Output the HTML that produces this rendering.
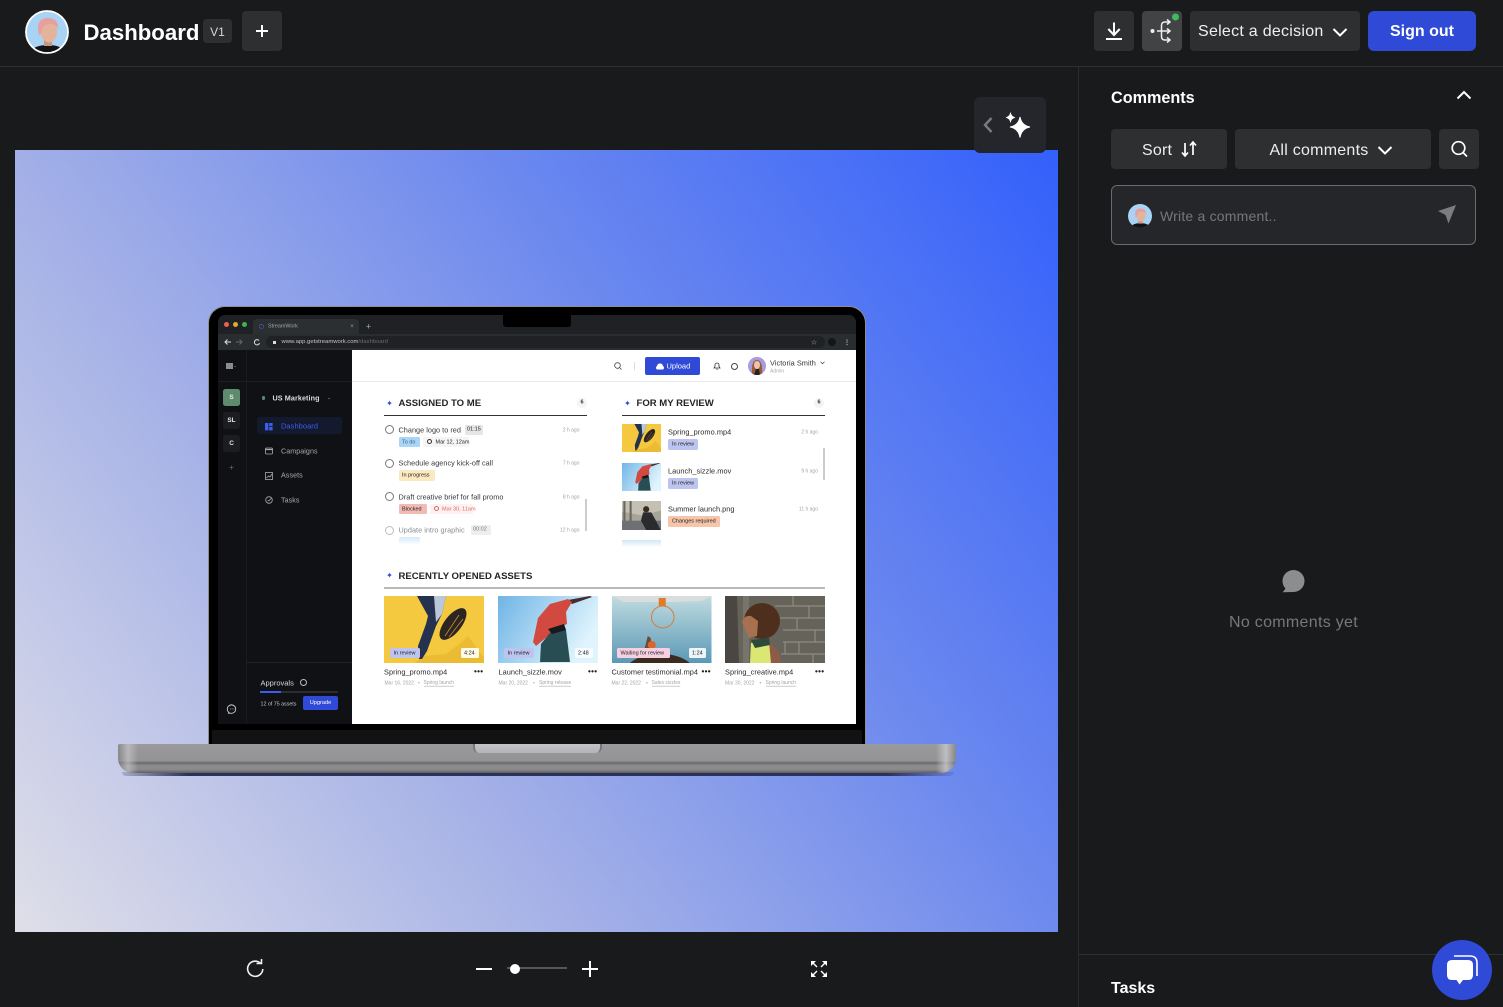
<!DOCTYPE html>
<html lang="en"><head><meta charset="utf-8"><title>Dashboard</title>
<style>
*{box-sizing:border-box}
html,body{margin:0;padding:0;width:1503px;height:1007px;overflow:hidden;background:#191a1c;font-family:"Liberation Sans",sans-serif;color:#fff}
.a{position:absolute}
.t{position:absolute;white-space:nowrap;line-height:1;transform:translateY(-50%)}
.r{transform:translate(-100%,-50%)}
.c{transform:translate(-50%,-50%)}
.b{position:absolute;background:#2e2f31;border-radius:4px}
svg{position:absolute;overflow:visible}
.lp{position:absolute;left:0;top:0;width:1503px;height:1007px;filter:blur(.3px)}
.lp .t{margin-top:1px}
.lp .t.k,.lp .t.n{margin-top:.4px}
.k{color:#333a40;font-size:7.3px;letter-spacing:.02px}
.g{color:#a3a3a3;font-size:5px}
.tg{position:absolute;border-radius:1.5px}
.f{color:#222;font-size:5.5px}
.n{color:#2a2a2a;font-size:7.35px;letter-spacing:.05px}
.m{color:#a5a5a5;font-size:5px}
.ml{color:#a5a5a5;font-size:5px;border-bottom:.5px solid #ccc;padding-bottom:.5px}
.sd{color:#a9abaf;font-size:7.1px;letter-spacing:.08px}
.d{color:#222;font-size:8px;font-weight:bold;letter-spacing:.3px}
.h{color:#232323;font-weight:bold;font-size:9.55px}
</style></head><body>

<svg width="0" height="0" style="position:absolute">
<defs>
<linearGradient id="sky2" x1="0" x2="1" y1="0" y2=".4"><stop offset="0" stop-color="#6fb4e6"/><stop offset="1" stop-color="#dff4fd"/></linearGradient>
<linearGradient id="sky3" x1="0" x2="0" y1="0" y2="1"><stop offset="0" stop-color="#c0dbe0"/><stop offset="1" stop-color="#5b98b6"/></linearGradient>
<symbol id="p1" viewBox="0 0 100 67" preserveAspectRatio="xMidYMid slice">
<rect width="100" height="67" fill="#f4c93f"/>
<path d="M30 67 L40 60 L62 58 L78 46 L84 40 L100 62 V67Z" fill="#ebbb33"/>
<path d="M33 0 H62 L58 18 L52 30 L43 55 L38 63 L35 63 L34 50 L42 28 L44 20Z" fill="#24324f"/>
<path d="M50 0H62L58 18L52 26 Z" fill="#b9c8d8"/>
<ellipse cx="69" cy="28" rx="8.5" ry="19" transform="rotate(38 69 28)" fill="#2b2620"/>
<path d="M61 40 L75 19 M65 41 L79 23" stroke="#c98b3c" stroke-width=".8" fill="none"/>
</symbol>
<symbol id="p2" viewBox="0 0 100 67" preserveAspectRatio="xMidYMid slice">
<rect width="100" height="67" fill="url(#sky2)"/>
<path d="M70 4 L92 0 L94 1 L74 8Z" fill="#4a2b2b"/>
<path d="M35 46 L40 22 L52 8 L70 3 L74 6 L68 16 L69 28 L56 33 L50 40 L38 50Z" fill="#d2493f"/>
<path d="M43 48 L56 32 L68 34 L72 66 H42Z" fill="#284e54"/>
<path d="M50 33 L66 28 L68 34 L54 38Z" fill="#17191c"/>
</symbol>
<symbol id="p3" viewBox="0 0 100 67" preserveAspectRatio="xMidYMid slice">
<rect width="100" height="67" fill="url(#sky3)"/>
<path d="M0 0H100L90 5 L60 6 H40 L12 6Z" fill="#d9dedd"/>
<rect x="47" y="2" width="7" height="8" fill="#e07b2c"/>
<ellipse cx="51" cy="21" rx="11.3" ry="11" fill="none" stroke="#d17f3c" stroke-width="1"/>
<path d="M18 67 Q30 57 55 58 Q70 60 78 67Z" fill="#3c2c1f"/>
<path d="M32 56 L36 40 L39 42 L40 58Z" fill="#70493a"/>
<circle cx="40" cy="49" r="4" fill="#d9662a"/>
</symbol>
<symbol id="p4" viewBox="0 0 100 67" preserveAspectRatio="xMidYMid slice">
<rect width="100" height="67" fill="#66645a"/>
<path d="M0 0H12L14 67H0Z" fill="#4a4743"/>
<path d="M50 10H100M55 22H100M58 34H100M58 46H100M56 58H100M68 0V10M84 10V22M72 22V34M90 34V46M74 46V58M60 46V58M88 58V67" stroke="#a09d90" stroke-width="1.2" opacity=".7"/>
<rect x="18" y="0" width="6" height="67" fill="#8a8a82" opacity=".45"/>
<path d="M28 67 L30 44 L42 44 L54 56 L56 67Z" fill="#8e5c46"/>
<circle cx="37" cy="25" r="18" fill="#4e2f1e"/>
<path d="M17 26 Q19 19 26 20 L33 25 L32 40 L24 42 L20 33Z" fill="#a7714f"/>
<path d="M26 47 L44 46 L46 67 H25Z" fill="#dbe773"/>
<path d="M26 44 L44 42 L45 49 L30 52Z" fill="#2e4a3a"/>
</symbol>
<symbol id="p5" viewBox="0 0 39 28" preserveAspectRatio="xMidYMid slice">
<rect width="39" height="28" fill="#a7a49a"/>
<path d="M0 0H39V9L20 14L0 10Z" fill="#c4c0b4"/>
<path d="M3 0V28M9 0V28" stroke="#6b675e" stroke-width="2"/>
<rect y="19" width="39" height="9" fill="#6e7073"/>
<circle cx="24" cy="8" r="3" fill="#3b2a22"/>
<path d="M21 11 L29 11 L34 20 L38 28 H24 L19 19Z" fill="#2b2b2e"/>
</symbol>
<symbol id="av" viewBox="0 0 44 44" preserveAspectRatio="xMidYMid slice">
<rect width="44" height="44" fill="#a9d3f4"/>
<path d="M3 44 Q8 35 23 35 Q38 35 41 44Z" fill="#111316"/>
<rect x="19" y="27" width="8" height="9" fill="#c9937e"/>
<ellipse cx="24" cy="22" rx="8" ry="10.5" fill="#e3b39c"/>
<path d="M14 25 Q10 9 22 8 Q34 8 33 19 Q30 13 24 14 Q17 15 16 24Z" fill="#e89f9f"/>
</symbol>
<symbol id="av2" viewBox="0 0 18 18" preserveAspectRatio="xMidYMid slice">
<rect width="18" height="18" fill="#a79be0"/>
<path d="M4 18 Q3 3 9 3 Q15 3 14 18Z" fill="#9a5a3a"/>
<ellipse cx="9" cy="8" rx="3" ry="4" fill="#eec4aa"/>
<path d="M6 18 L8 12 H11 L12 18Z" fill="#222"/>
</symbol>
</defs>
</svg>

<!-- canvas -->
<div class="a" style="left:15px;top:150px;width:1043px;height:782px;background:linear-gradient(53deg,#dfdfe8 0,#a2afe7 36%,#6e8aee 64%,#3360fb 100%)"></div>

<div class="lp">
<!-- laptop -->
<div class="a" style="left:208px;top:306px;width:658px;height:440px;background:#000;border:1.5px solid #8d8d92;border-bottom:0;border-radius:17px 17px 0 0"></div>
<div class="a" style="left:218px;top:315px;width:638px;height:19px;background:#1f2124;border-radius:7px 7px 0 0"></div>
<div class="a" style="left:503px;top:315px;width:68px;height:12px;background:#000;border-radius:0 0 3px 3px"></div>
<div class="a" style="left:253px;top:319px;width:106px;height:15px;background:#2c2f32;border-radius:4px 4px 0 0"></div>
<div class="a" style="left:218px;top:334px;width:638px;height:16px;background:#2a2d30"></div>
<div class="a" style="left:266px;top:336px;width:559px;height:12px;background:#1f2124;border-radius:6px"></div>
<div class="a" style="left:224px;top:322px;width:5px;height:5px;border-radius:50%;background:#ec5f55"></div>
<div class="a" style="left:233px;top:322px;width:5px;height:5px;border-radius:50%;background:#e3a832"></div>
<div class="a" style="left:241.5px;top:322px;width:5px;height:5px;border-radius:50%;background:#3eb54b"></div>
<div class="a" style="left:259px;top:323.5px;width:5px;height:5px;border-radius:50%;border:1.3px dotted #4a6be8"></div>
<div class="t" style="left:268px;top:326px;font-size:5.4px;color:#a5a7aa">StreamWork</div>
<div class="t c" style="left:352px;top:326px;font-size:6px;color:#999">×</div>
<div class="t c" style="left:368.5px;top:326px;font-size:9px;color:#aaa">+</div>
<svg style="left:222px;top:338px" width="40" height="8" viewBox="0 0 40 8" fill="none" stroke-width="1"><path d="M9 4H3M5.5 1.5L3 4L5.5 6.5" stroke="#ddd"/><path d="M14 4H20M17.5 1.5L20 4L17.5 6.5" stroke="#666"/><path d="M37 2.6A2.6 2.6 0 1 0 37.5 5" stroke="#ddd"/></svg>
<div class="a" style="left:273px;top:340.5px;width:3px;height:3px;background:#ddd"></div>
<div class="t" style="left:281.5px;top:341.5px;font-size:5.9px;color:#c3c5c8">www.app.getstreamwork.com<span style="color:#6a6d70">/dashboard</span></div>
<div class="t c" style="left:814px;top:341.5px;font-size:7px;color:#bbb">☆</div>
<div class="a" style="left:828px;top:338px;width:8px;height:8px;border-radius:50%;background:#141517"></div>
<div class="t c" style="left:847px;top:341.5px;font-size:7px;color:#bbb;font-weight:bold">⋮</div>

<!-- app sidebar -->
<div class="a" style="left:218px;top:350px;width:134px;height:374px;background:#101114"></div>
<div class="a" style="left:246px;top:350px;width:1px;height:374px;background:#1a1b1f"></div>
<div class="a" style="left:218px;top:381px;width:134px;height:1px;background:#1d1e22"></div>
<div class="a" style="left:226px;top:363px;width:7px;height:6px;background:#8a8c90"></div>
<div class="t" style="left:233.5px;top:365px;font-size:4px;color:#aaa">⌄</div>
<div class="a" style="left:223px;top:389px;width:17px;height:17px;background:#5e8b6d;border-radius:2.5px"></div>
<div class="t c" style="left:231.5px;top:397px;font-size:6.4px;font-weight:bold;color:#e8f0ea">S</div>
<div class="a" style="left:223px;top:412px;width:17px;height:17px;background:#1b1d20;border-radius:2.5px"></div>
<div class="t c" style="left:231.5px;top:420px;font-size:6.4px;font-weight:bold;color:#e8e8e8">SL</div>
<div class="a" style="left:223px;top:435px;width:17px;height:17px;background:#1b1d20;border-radius:2.5px"></div>
<div class="t c" style="left:231.5px;top:443px;font-size:6.4px;font-weight:bold;color:#e8e8e8">C</div>
<div class="t c" style="left:231.5px;top:467px;font-size:8px;color:#6f7175">+</div>
<div class="a" style="left:261.5px;top:396px;width:3.5px;height:3.5px;background:#5e8b6d;border-radius:50%"></div>
<div class="t" style="left:272.5px;top:396.8px;font-size:7.2px;font-weight:bold;color:#dcdde0;letter-spacing:.1px">US Marketing</div>
<div class="a" style="left:328px;top:397.5px;border:1.5px solid transparent;border-top:1.5px solid #aaa"></div>
<div class="a" style="left:257px;top:417px;width:85px;height:17px;background:#141a2e;border-radius:3px"></div>
<svg style="left:265px;top:422.5px" width="8" height="8"><rect width="3.4" height="7.4" fill="#3d5df0"/><rect x="4.2" width="3.4" height="3.2" fill="#3d5df0"/><rect x="4.2" y="4" width="3.4" height="3.4" fill="#3d5df0"/></svg>
<div class="t" style="left:281px;top:424.8px;font-size:7.4px;color:#3d5df0;letter-spacing:.1px">Dashboard</div>
<svg style="left:265px;top:447px" width="8" height="8" fill="none" stroke="#a9abaf" stroke-width=".8"><rect x=".5" y="1" width="7" height="6" rx="1"/><path d="M.5 2.5H7.5" stroke-width="1.2"/></svg>
<div class="t sd" style="left:281px;top:450.5px">Campaigns</div>
<svg style="left:265px;top:471.5px" width="8" height="8" fill="none" stroke="#a9abaf" stroke-width=".8"><rect x=".5" y=".5" width="7" height="7"/><path d="M1.5 6L3.5 4L5 5L7 2"/></svg>
<div class="t sd" style="left:281px;top:475px">Assets</div>
<svg style="left:265px;top:496px" width="8" height="8" fill="none" stroke="#a9abaf" stroke-width=".8"><circle cx="4" cy="4" r="3.3"/><path d="M2.6 4L3.8 5L6.5 2"/></svg>
<div class="t sd" style="left:281px;top:499.5px">Tasks</div>
<div class="a" style="left:246px;top:662px;width:106px;height:1px;background:#232428"></div>
<div class="t" style="left:260.5px;top:682px;font-size:7.5px;color:#d8d9dc">Approvals</div>
<div class="a" style="left:299.5px;top:679px;width:7px;height:7px;border:.8px solid #bbb;border-radius:50%"></div>
<div class="a" style="left:260px;top:691px;width:78px;height:2px;background:#2a2c30"></div>
<div class="a" style="left:260px;top:691px;width:21px;height:2px;background:#3d5df0"></div>
<div class="t" style="left:260.5px;top:703.5px;font-size:5.3px;color:#c5c6c9">12 of 75 assets</div>
<div class="a" style="left:303px;top:696px;width:35px;height:14px;background:#2e4ad6;border-radius:2px"></div>
<div class="t c" style="left:320.5px;top:702.5px;font-size:5.6px;color:#fff">Upgrade</div>
<svg style="left:227px;top:704px" width="10" height="10" fill="none" stroke="#cfd0d3" stroke-width=".9"><path d="M2 8.5A4.2 4.2 0 1 1 3.5 9.2H1.5Z"/><path d="M3 5H3.6M4.8 5H5.4M6.6 5H7.2"/></svg>

<!-- app main -->
<div class="a" style="left:352px;top:350px;width:504px;height:374px;background:#fff"></div>
<div class="a" style="left:352px;top:381px;width:504px;height:1px;background:#e9e9e9"></div>
<svg style="left:614px;top:362px" width="8" height="8" fill="none" stroke="#444" stroke-width=".8"><circle cx="3.5" cy="3.5" r="2.8"/><path d="M5.5 5.5L7.6 7.6"/></svg>
<div class="a" style="left:634px;top:362px;width:.6px;height:8px;background:#ddd"></div>
<div class="a" style="left:645px;top:357px;width:55px;height:18px;background:#2e4ad6;border-radius:2px"></div>
<svg style="left:655px;top:362.5px" width="10" height="7"><path d="M2 6.5A2 2 0 0 1 2 3Q2.5 .5 5 .5Q7.5 .5 8 3A2 2 0 0 1 8 6.5Z" fill="#fff"/></svg>
<div class="t" style="left:666.5px;top:365.2px;font-size:7.5px;color:#fff">Upload</div>
<svg style="left:712.5px;top:362px" width="8" height="8" fill="none" stroke="#333" stroke-width=".8"><path d="M1 6H7L6 4.5V3A2 2 0 0 0 2 3V4.5Z"/><path d="M3.3 7.2H4.7"/></svg>
<div class="a" style="left:730.5px;top:362.5px;width:7px;height:7px;border:.7px solid #444;border-radius:50%"></div>
<svg style="left:748px;top:357px" width="18" height="18"><clipPath id="cv"><circle cx="9" cy="9" r="9"/></clipPath><g clip-path="url(#cv)"><use href="#av2" width="18" height="18"/></g></svg>
<div class="t" style="left:770px;top:362px;font-size:7.35px;color:#333;letter-spacing:.05px">Victoria Smith</div>
<div class="t" style="left:770px;top:371px;font-size:5px;color:#aaa">Admin</div>
<svg style="left:820px;top:361px" width="5" height="4" fill="none" stroke="#444" stroke-width=".7"><path d="M.5 .8L2.5 2.8L4.5 .8"/></svg>

<!-- Assigned -->
<div class="t c" style="left:389.5px;top:402.5px;font-size:8px;color:#2e4ad6">✦</div>
<div class="t h" style="left:398.5px;top:403px">ASSIGNED TO ME</div>
<div class="a" style="left:577px;top:398px;width:10px;height:10px;border-radius:50%;background:#f4f4f4"></div>
<div class="t c" style="left:582px;top:402px;font-size:5.5px;font-weight:bold;color:#333">6</div>
<div class="a" style="left:384px;top:415px;width:203px;height:1px;background:#333"></div>

<div class="a" style="left:385px;top:425px;width:9px;height:9px;border:.7px solid #777;border-radius:50%"></div>
<div class="t k" style="left:398.5px;top:429.5px">Change logo to red</div>
<div class="tg" style="left:465px;top:424.5px;width:18px;height:10.5px;background:#e6e6e6"></div>
<div class="t f" style="left:467px;top:429px">01:15</div>
<div class="t g r" style="left:579.5px;top:429.5px">2 h ago</div>
<div class="tg" style="left:398.5px;top:436.5px;width:21px;height:10.5px;background:#abd5f6"></div>
<div class="t f" style="left:402px;top:441.5px;color:#35607f">To do</div>
<div class="tg" style="left:423px;top:436.5px;width:46px;height:10.5px;background:#f5f5f5"></div>
<div class="a" style="left:427px;top:439px;width:5px;height:5px;border:.6px solid #333;border-radius:50%"></div>
<div class="t f" style="left:435.5px;top:441.5px">Mar 12, 12am</div>

<div class="a" style="left:385px;top:458.5px;width:9px;height:9px;border:.7px solid #777;border-radius:50%"></div>
<div class="t k" style="left:398.5px;top:463px">Schedule agency kick-off call</div>
<div class="t g r" style="left:579.5px;top:463px">7 h ago</div>
<div class="tg" style="left:398.5px;top:470px;width:36px;height:10.5px;background:#fbe9c2"></div>
<div class="t f" style="left:402px;top:475px">In progress</div>

<div class="a" style="left:385px;top:492px;width:9px;height:9px;border:.7px solid #777;border-radius:50%"></div>
<div class="t k" style="left:398.5px;top:496.5px">Draft creative brief for fall promo</div>
<div class="t g r" style="left:579.5px;top:496.5px">8 h ago</div>
<div class="tg" style="left:398.5px;top:503.5px;width:28px;height:10.5px;background:#f3bab4"></div>
<div class="t f" style="left:402px;top:508.5px">Blocked</div>
<div class="tg" style="left:430px;top:503.5px;width:43px;height:10.5px;background:#fdf2f1"></div>
<div class="a" style="left:434px;top:506px;width:5px;height:5px;border:.6px solid #dd6a60;border-radius:50%"></div>
<div class="t f" style="left:442px;top:508.5px;color:#dd6a60">Mar 30, 11am</div>

<div class="a" style="left:385px;top:525.5px;width:9px;height:9px;border:.7px solid #bbb;border-radius:50%"></div>
<div class="t k" style="left:398.5px;top:529.5px;color:#8a8c90">Update intro graphic</div>
<div class="tg" style="left:471px;top:524.5px;width:20px;height:10.5px;background:#eee"></div>
<div class="t f" style="left:473px;top:529px;color:#777">00:02</div>
<div class="t g r" style="left:579.5px;top:529.5px">12 h ago</div>
<div class="tg" style="left:398.5px;top:537px;width:21px;height:8px;background:linear-gradient(#d7ebfb,#fff)"></div>
<div class="a" style="left:585px;top:499px;width:2px;height:32px;background:#ccc"></div>

<!-- Review -->
<div class="t c" style="left:627.5px;top:402.5px;font-size:8px;color:#2e4ad6">✦</div>
<div class="t h" style="left:636.5px;top:403px">FOR MY REVIEW</div>
<div class="a" style="left:814px;top:398px;width:10px;height:10px;border-radius:50%;background:#f4f4f4"></div>
<div class="t c" style="left:819px;top:402px;font-size:5.5px;font-weight:bold;color:#333">6</div>
<div class="a" style="left:622px;top:415px;width:203px;height:1px;background:#333"></div>

<svg style="left:622px;top:424px" width="39" height="28"><use href="#p1" width="39" height="28"/></svg>
<div class="t n" style="left:668px;top:432px">Spring_promo.mp4</div>
<div class="t g r" style="left:818px;top:432px">2 h ago</div>
<div class="tg" style="left:668px;top:439px;width:30px;height:11px;background:#bdc4ef"></div>
<div class="t f" style="left:672px;top:444px">In review</div>

<svg style="left:622px;top:463px" width="39" height="28"><use href="#p2" width="39" height="28"/></svg>
<div class="t n" style="left:668px;top:470.5px">Launch_sizzle.mov</div>
<div class="t g r" style="left:818px;top:470.5px">9 h ago</div>
<div class="tg" style="left:668px;top:478px;width:30px;height:11px;background:#bdc4ef"></div>
<div class="t f" style="left:672px;top:483px">In review</div>

<svg style="left:622px;top:501px" width="39" height="29"><use href="#p5" width="39" height="29"/></svg>
<div class="t n" style="left:668px;top:509px">Summer launch.png</div>
<div class="t g r" style="left:818px;top:509px">11 h ago</div>
<div class="tg" style="left:668px;top:516px;width:52px;height:11px;background:#f6c5aa"></div>
<div class="t f" style="left:672px;top:521px">Changes required</div>
<div class="a" style="left:622px;top:540px;width:39px;height:7px;background:linear-gradient(#cfe6f5,#fff)"></div>
<div class="a" style="left:823px;top:448px;width:2px;height:32px;background:#ccc"></div>

<!-- Recent -->
<div class="t c" style="left:389.5px;top:575px;font-size:8px;color:#2e4ad6">✦</div>
<div class="t h" style="left:398.5px;top:575.5px">RECENTLY OPENED ASSETS</div>
<div class="a" style="left:384px;top:587px;width:441px;height:2px;background:#b8b8b8"></div>

<svg style="left:384px;top:596px" width="100" height="67"><use href="#p1" width="100" height="67"/></svg>
<svg style="left:498px;top:596px" width="100" height="67"><use href="#p2" width="100" height="67"/></svg>
<svg style="left:612px;top:596px" width="99.5" height="67"><use href="#p3" width="99.5" height="67"/></svg>
<svg style="left:725px;top:596px" width="100" height="67"><use href="#p4" width="100" height="67"/></svg>

<div class="tg" style="left:390px;top:647.5px;width:29.5px;height:10.5px;background:#bdc4ef"></div>
<div class="t f" style="left:393.5px;top:652.5px">In review</div>
<div class="tg" style="left:461px;top:647.5px;width:17.5px;height:10.5px;background:#fffbe8"></div>
<div class="t f" style="left:464px;top:652.5px">4:24</div>
<div class="tg" style="left:504px;top:647.5px;width:29.5px;height:10.5px;background:#bdc4ef"></div>
<div class="t f" style="left:507.5px;top:652.5px">In review</div>
<div class="tg" style="left:575px;top:647.5px;width:17.5px;height:10.5px;background:#f5fbff"></div>
<div class="t f" style="left:578px;top:652.5px">2:48</div>
<div class="tg" style="left:617px;top:647.5px;width:53px;height:10.5px;background:#f6cfe0"></div>
<div class="t f" style="left:620.5px;top:652.5px">Waiting for review</div>
<div class="tg" style="left:689px;top:647.5px;width:17px;height:10.5px;background:#eef5f8"></div>
<div class="t f" style="left:692px;top:652.5px">1:24</div>

<div class="t n" style="left:384px;top:672px">Spring_promo.mp4</div>
<div class="t n" style="left:498.5px;top:672px">Launch_sizzle.mov</div>
<div class="t n" style="left:611.5px;top:672px">Customer testimonial.mp4</div>
<div class="t n" style="left:725px;top:672px">Spring_creative.mp4</div>
<div class="t d" style="left:474px;top:671px">•••</div>
<div class="t d" style="left:588px;top:671px">•••</div>
<div class="t d" style="left:701.5px;top:671px">•••</div>
<div class="t d" style="left:815px;top:671px">•••</div>

<div class="t m" style="left:384.5px;top:682.5px">Mar 16, 2022</div><div class="t m" style="left:418px;top:682.5px">•</div><div class="t ml" style="left:423.5px;top:682.5px">Spring launch</div>
<div class="t m" style="left:498.5px;top:682.5px">Mar 20, 2022</div><div class="t m" style="left:533px;top:682.5px">•</div><div class="t ml" style="left:539px;top:682.5px">Spring release</div>
<div class="t m" style="left:611.5px;top:682.5px">Mar 22, 2022</div><div class="t m" style="left:646px;top:682.5px">•</div><div class="t ml" style="left:651.5px;top:682.5px">Sales sizzles</div>
<div class="t m" style="left:725px;top:682.5px">Mar 30, 2022</div><div class="t m" style="left:759.5px;top:682.5px">•</div><div class="t ml" style="left:765.5px;top:682.5px">Spring launch</div>

<!-- laptop base -->
<div class="a" style="left:212px;top:730px;width:650px;height:14px;background:#121212"></div>
<div class="a" style="left:122px;top:772px;width:832px;height:4px;background:linear-gradient(90deg,rgba(40,45,80,.2),#2c3158 8%,#2c3158 92%,rgba(40,45,80,.1));border-radius:0 0 10px 10px"></div>
<div class="a" style="left:118px;top:744px;width:838px;height:29px;border-radius:2px 2px 15px 15px;background:linear-gradient(#9a9a9d 0,#939396 58%,#6b6b6e 65%,#8d8d90 75%,#8a8a8d 88%,#606063 100%)"></div>
<div class="a" style="left:936px;top:744px;width:20px;height:29px;border-radius:0 2px 15px 0;background:linear-gradient(90deg,rgba(200,200,203,0),rgba(205,205,208,.75) 50%,rgba(120,120,124,.5))"></div>
<div class="a" style="left:118px;top:744px;width:20px;height:29px;border-radius:2px 0 0 15px;background:linear-gradient(90deg,rgba(120,120,124,.5),rgba(205,205,208,.6) 50%,rgba(200,200,203,0))"></div>
<div class="a" style="left:473px;top:744px;width:129px;height:9px;background:linear-gradient(#c4c4c7,#b4b4b7);border-radius:0 0 6px 6px;border-left:2px solid #77777a;border-right:2px solid #77777a"></div>
</div>

<!-- Top bar -->
<div class="a" style="left:0;top:0;width:1503px;height:67px;background:#191a1c;border-bottom:1px solid #2f3033"></div>
<svg style="left:25px;top:10px" width="44" height="44"><clipPath id="ca"><circle cx="22" cy="22" r="21"/></clipPath><g clip-path="url(#ca)"><use href="#av" width="44" height="44"/></g><circle cx="22" cy="22" r="21" fill="none" stroke="#fff" stroke-width="1.8"/></svg>
<div class="t" style="left:83.5px;top:32.5px;font-size:22.2px;font-weight:bold">Dashboard</div>
<div class="b" style="left:203px;top:19px;width:29px;height:24px"></div>
<div class="t c" style="left:217.5px;top:32px;font-size:12px;color:#d7d7d8">V1</div>
<div class="b" style="left:242px;top:11px;width:40px;height:40px"></div>
<svg style="left:242px;top:11px" width="40" height="40" stroke="#fff" stroke-width="2"><path d="M20 14V26M14 20H26"/></svg>

<div class="b" style="left:1094px;top:11px;width:40px;height:40px"></div>
<svg style="left:1094px;top:11px" width="40" height="40" fill="none" stroke="#fff" stroke-width="2"><path d="M20 11.5V24M14.3 18L20 24L25.7 18"/><path d="M12 28H28"/></svg>
<div class="b" style="left:1142px;top:11px;width:40px;height:40px;background:#424345"></div>
<svg style="left:1142px;top:11px" width="40" height="40" fill="none" stroke="#eee" stroke-width="1.5"><circle cx="10.5" cy="20" r="2" fill="#eee" stroke="none"/><path d="M15 20H28M28 11H23Q19.5 11 19.5 14.5V25.5Q19.5 29 23 29H28"/><path d="M25 8.5L28 11L25 13.5M25 17.5L28 20L25 22.5M25 26.5L28 29L25 31.5"/><circle cx="33.5" cy="6" r="3.5" fill="#3dbb5f" stroke="none"/></svg>
<div class="b" style="left:1190px;top:11px;width:170px;height:40px"></div>
<div class="t" style="left:1198px;top:32px;font-size:16px;letter-spacing:.27px;color:#f0f0f0">Select a decision</div>
<svg style="left:1332px;top:27px" width="16" height="10" fill="none" stroke="#fff" stroke-width="2"><path d="M1.5 2L8 8.5L14.5 2"/></svg>
<div class="b" style="left:1368px;top:11px;width:108px;height:40px;background:#2e4ad6;border-radius:6px"></div>
<div class="t c" style="left:1422px;top:32px;font-size:16px;font-weight:bold">Sign out</div>

<!-- Right panel -->
<div class="a" style="left:1078px;top:67px;width:1px;height:940px;background:#2b2c2f"></div>
<div class="t" style="left:1111px;top:97.5px;font-size:16.2px;font-weight:bold">Comments</div>
<svg style="left:1456px;top:90px" width="16" height="10" fill="none" stroke="#fff" stroke-width="2"><path d="M1.5 8.5L8 2L14.5 8.5"/></svg>
<div class="b" style="left:1111px;top:129px;width:116px;height:40px"></div>
<div class="t" style="left:1142px;top:150.5px;font-size:16px;letter-spacing:.2px;color:#eee">Sort</div>
<svg style="left:1180px;top:140px" width="18" height="18" fill="none" stroke="#fff" stroke-width="1.7"><path d="M5 3V16M2 12.5L5 16L8 12.5M13 15V2M10 5.5L13 2L16 5.5"/></svg>
<div class="b" style="left:1235px;top:129px;width:196px;height:40px"></div>
<div class="t" style="left:1269.5px;top:150.5px;font-size:16px;letter-spacing:.25px;color:#eee">All comments</div>
<svg style="left:1377px;top:145px" width="16" height="10" fill="none" stroke="#fff" stroke-width="2"><path d="M1.5 2L8 8.5L14.5 2"/></svg>
<div class="b" style="left:1439px;top:129px;width:40px;height:40px"></div>
<svg style="left:1439px;top:129px" width="40" height="40" fill="none" stroke="#fff" stroke-width="1.7"><circle cx="19.5" cy="19" r="6.3"/><path d="M24 23.5L28 27.5"/></svg>

<div class="a" style="left:1111px;top:185px;width:365px;height:60px;background:#25262a;border:1px solid #6a6b6e;border-radius:6px"></div>
<svg style="left:1128px;top:204px" width="24" height="24"><clipPath id="cb"><circle cx="12" cy="12" r="12"/></clipPath><g clip-path="url(#cb)"><use href="#av" width="24" height="24"/></g></svg>
<div class="t" style="left:1160px;top:216px;font-size:14px;letter-spacing:.2px;color:#76777a">Write a comment..</div>
<svg style="left:1436px;top:204px" width="22" height="21"><path d="M20 1L2 7L9.5 11L12.5 19.5Z" fill="#7b7c7f"/></svg>

<svg style="left:1281px;top:569px" width="25" height="25"><circle cx="12.5" cy="12" r="11" fill="#8c8d8f"/><path d="M1.5 23.2L12 23L5 15Q5.5 20 1.5 23.2Z" fill="#8c8d8f"/></svg>
<div class="t c" style="left:1293.5px;top:622.5px;font-size:16px;letter-spacing:.3px;color:#77787b">No comments yet</div>

<div class="a" style="left:1079px;top:954px;width:424px;height:1px;background:#2f3033"></div>
<div class="t" style="left:1111px;top:988.5px;font-size:16px;font-weight:bold">Tasks</div>
<div class="a" style="left:1432px;top:940px;width:60px;height:60px;border-radius:50%;background:#2e4ad6"></div>
<svg style="left:1432px;top:940px" width="60" height="60" fill="none"><path d="M22 16H38Q45 16 45 23V36" stroke="#fff" stroke-width="1.6"/><path d="M20 20H36Q41 20 41 25V35Q41 40 36 40H31L27.5 44.5L24.5 40H20Q15 40 15 35V25Q15 20 20 20Z" fill="#fff"/></svg>

<!-- AI float -->
<div class="a" style="left:974px;top:97px;width:72px;height:56px;background:#25262b;border-radius:6px"></div>
<svg style="left:974px;top:97px" width="72" height="56"><path d="M17.5 21L11 28L17.5 35" fill="none" stroke="#7a7b7e" stroke-width="2.4"/><path d="M46 20Q47.5 28.5 56 30Q47.5 31.5 46 40.5Q44.5 31.5 36 30Q44.5 28.5 46 20Z" fill="#fff" stroke="#fff" stroke-width="1"/><path d="M36.5 15.5Q37 19.5 41 20.5Q37 21.5 36.5 25.5Q36 21.5 32 20.5Q36 19.5 36.5 15.5Z" fill="#fff" stroke="#fff" stroke-width=".6"/></svg>

<!-- Bottom controls -->
<svg style="left:245px;top:959px" width="20" height="20" fill="none" stroke="#f0f0f0" stroke-width="1.6"><path d="M15.7 4.5A7.6 7.6 0 1 0 17.8 10"/><path d="M11.5 4.5H16.5V0"/></svg>
<div class="a" style="left:476px;top:968px;width:16px;height:2px;background:#fff"></div>
<div class="a" style="left:507px;top:967px;width:60px;height:2px;background:#55565a"></div>
<div class="a" style="left:510px;top:963.5px;width:10px;height:10px;background:#fff;border-radius:50%"></div>
<svg style="left:582px;top:961px" width="16" height="16" stroke="#fff" stroke-width="2"><path d="M8 0V16M0 8H16"/></svg>
<svg style="left:811px;top:961px" width="16" height="16" fill="#fff" stroke="#fff"><path d="M0 0H5L0 5Z" stroke="none"/><path d="M16 0V5L11 0Z" stroke="none"/><path d="M0 16V11L5 16Z" stroke="none"/><path d="M16 16H11L16 11Z" stroke="none"/><path d="M2 2L6 6M14 2L10 6M2 14L6 10M14 14L10 10" stroke-width="1.4"/></svg>

</body></html>
